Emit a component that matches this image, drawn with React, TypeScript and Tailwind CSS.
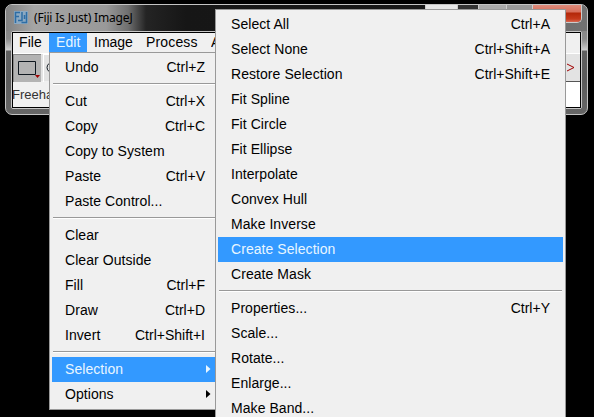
type Item = { label: string; keys?: string; active?: boolean; arrow?: boolean } | null;

const editItems: Item[] = [
  { label: "Undo", keys: "Ctrl+Z" },
  null,
  { label: "Cut", keys: "Ctrl+X" },
  { label: "Copy", keys: "Ctrl+C" },
  { label: "Copy to System" },
  { label: "Paste", keys: "Ctrl+V" },
  { label: "Paste Control..." },
  null,
  { label: "Clear" },
  { label: "Clear Outside" },
  { label: "Fill", keys: "Ctrl+F" },
  { label: "Draw", keys: "Ctrl+D" },
  { label: "Invert", keys: "Ctrl+Shift+I" },
  null,
  { label: "Selection", active: true, arrow: true },
  { label: "Options", arrow: true },
];

const selectionItems: Item[] = [
  { label: "Select All", keys: "Ctrl+A" },
  { label: "Select None", keys: "Ctrl+Shift+A" },
  { label: "Restore Selection", keys: "Ctrl+Shift+E" },
  { label: "Fit Spline" },
  { label: "Fit Circle" },
  { label: "Fit Ellipse" },
  { label: "Interpolate" },
  { label: "Convex Hull" },
  { label: "Make Inverse" },
  { label: "Create Selection", active: true },
  { label: "Create Mask" },
  null,
  { label: "Properties...", keys: "Ctrl+Y" },
  { label: "Scale..." },
  { label: "Rotate..." },
  { label: "Enlarge..." },
  { label: "Make Band..." },
];

function Rows({ items, rowClass }: { items: Item[]; rowClass: string }) {
  return (
    <>
      {items.map((item, i) =>
        item === null ? (
          <div key={i} className="h-[9px] px-px pt-[3px]">
            <div className="h-[2px] border-t border-[#999] bg-white" />
          </div>
        ) : (
          <div
            key={i}
            className={`flex h-[25px] items-center justify-between whitespace-nowrap pl-[13px] ${rowClass} ${
              item.active ? "bg-[#3399ff] text-[#e8f6ff]" : "text-black"
            }`}
          >
            <span className="tracking-[0.06px]">{item.label}</span>
            {item.keys && <span>{item.keys}</span>}
            {item.arrow && (
              <svg width="5" height="8" viewBox="0 0 5 8" className="-mr-[6px] -mt-px" fill="currentColor">
                <path d="M0 0L4.5 4L0 8Z" />
              </svg>
            )}
          </div>
        ),
      )}
    </>
  );
}

export default function App() {
  return (
    <div className="relative h-[417px] w-[594px] overflow-hidden bg-black font-['Liberation_Sans',Arial,sans-serif] text-[14px] leading-[25px]">
      <div className="pl-[5px] pt-[4px]">
        <div className="flex h-[111px] w-[583px] flex-col rounded-[7px] border border-[#c4c4c4] bg-[linear-gradient(#777_0,#848484_20px,#8c8c8c_34px,#d0d0d0_45px,#606060_46px,#5c5c5c_75px,#666_100%)] px-[5px] pb-[5px]">
          <div className="-mx-[5px] flex h-[26px] shrink-0 items-start rounded-t-[6px] bg-[linear-gradient(90deg,#828282_0,#a5a5a5_28px,#999_100px,#707070_122px,#242424_140px,#161616_180px,#181818_420px,#444_465px,#666_490px,#727272_100%)]">
            <svg width="14" height="13" viewBox="0 0 14 13" className="ml-[8px] mt-[6px] shrink-0" fill="none">
              <rect width="14" height="13" fill="#8ba9c2" />
              <path d="M1.5 12V1.5H6M2 5.5H5M8 1V9.5H4M12.5 1V11.5H7.5M10.5 4V8" stroke="#2e6da4" strokeWidth="1.5" />
            </svg>
            <span className="ml-[6px] mt-[3px] whitespace-nowrap font-['Noto_Sans',sans-serif] text-[12px] leading-[19px] tracking-[-0.17px] text-black">
              (Fiji Is Just) ImageJ
            </span>
            <div className="ml-auto mr-[5px] flex h-[18px] w-[157px] rounded-b-[5px] border border-t-0 border-[#ccc]">
              <div className="w-[32px] border-r border-[#ccc] bg-[#e6e6e6]" />
              <div className="w-[20px] bg-[#333]" />
              <div className="w-[28px] border-l border-[#ccc] bg-[#aaa]" />
              <div className="w-[27px] border-x border-[#ccc] bg-[#999]" />
              <div className="flex-1 rounded-br-[4px] bg-[linear-gradient(#de8b7b_0,#d86f5b_7px,#b32708_8px,#c63a1b_14px,#df7967_18px)]" />
            </div>
          </div>
          <div className="flex min-h-0 flex-1 flex-col rounded-[2px] border border-[#c8c8c8]">
            <div className="flex min-h-0 flex-1 flex-col border border-black bg-[#f0f0f0]">
              <div className="flex h-[20px] shrink-0 items-start leading-[19px]">
                <span className="w-[36px] pl-[6px] tracking-[0.08px]">File</span>
                <span className="h-[19px] w-[38px] bg-[#3399ff] pl-[7px] tracking-[0.08px] text-[#e8f6ff]">Edit</span>
                <span className="w-[53px] pl-[7px]">Image</span>
                <span className="w-[71px] pl-[6px] tracking-[0.15px]">Process</span>
                <span className="w-[10px] overflow-hidden">A</span>
              </div>
              <div className="flex h-[28px] shrink-0 items-start border-t border-white bg-[#e3e3e3]">
                <div className="flex h-[28px] w-[28px] shrink-0 items-start justify-center border-l border-t border-[#888] bg-[#b3b3b3]">
                  <svg width="24" height="20" viewBox="0 0 24 20" fill="none" className="ml-px mt-[5px]">
                    <path d="M2.5 1.5H19.5V14.5H2.5Z" stroke="#101820" />
                    <path d="M19 15H24L21.5 18Z" fill="#a00000" />
                  </svg>
                </div>
                <div className="ml-[2px] h-[28px] w-[28px] border-l border-t border-white">
                  <svg width="20" height="26" viewBox="0 0 20 26" fill="none">
                    <ellipse cx="11" cy="12.5" rx="8" ry="6" stroke="#101820" />
                  </svg>
                </div>
                <svg width="18" height="27" viewBox="0 0 18 27" className="ml-auto mr-[5px]" fill="none">
                  <path d="M1 10L6 13.5L1 17M10 10L17 13.5L10 17" stroke="#a00000" />
                </svg>
              </div>
              <div className="flex min-h-0 flex-1">
                <span className="h-full flex-1 text-[13px] text-[#333] -ml-px leading-[27px]">Freeha</span>
                <div className="h-full w-[100px] border-t border-[#555] bg-white" />
              </div>
            </div>
          </div>
        </div>
      </div>

      <div className="absolute left-[49px] top-[52px] h-[358px] w-[168px] border border-[#999] bg-[#f0f0f0] pl-[2px] pt-[2px]">
        <Rows items={editItems} rowClass="pr-[11px]" />
      </div>

      <div className="absolute left-[215px] top-[9px] h-[420px] w-[351px] border border-[#999] bg-[#f0f0f0] px-[2px] pt-[2px]">
        <Rows items={selectionItems} rowClass="pr-[13px]" />
      </div>
    </div>
  );
}
